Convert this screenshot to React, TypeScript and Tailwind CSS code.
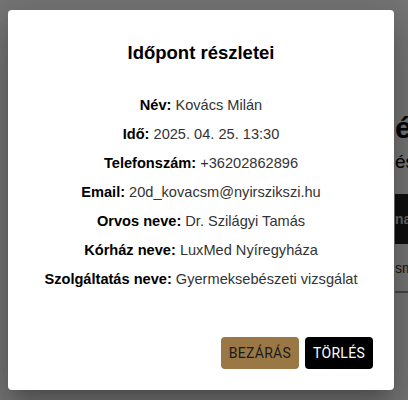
import React from "react";

const rows: [string, string][] = [
  ["Név:", "Kovács Milán"],
  ["Idő:", "2025. 04. 25. 13:30"],
  ["Telefonszám:", "+36202862896"],
  ["Email:", "20d_kovacsm@nyirszikszi.hu"],
  ["Orvos neve:", "Dr. Szilágyi Tamás"],
  ["Kórház neve:", "LuxMed Nyíregyháza"],
  ["Szolgáltatás neve:", "Gyermeksebészeti vizsgálat"],
];

export default function App() {
  return (
    <div className="relative w-[408px] h-[400px] overflow-hidden bg-white" style={{ fontFamily: '"Liberation Sans", Arial, sans-serif' }}>
      {/* background page */}
      <div className="flex flex-col pl-[395px] pt-[110px] text-black">
        <div className="text-[30px] font-bold leading-[36px] whitespace-nowrap">ések</div>
        <div className="text-[19px] leading-[24px] mt-[4px] whitespace-nowrap">ések</div>
        <div className="mt-[20px] h-[50px] bg-[#222] text-[#ddd] text-[14px] font-bold flex items-center whitespace-nowrap">nai</div>
        <div className="mt-[14px] text-[14px] text-[#4a3510] whitespace-nowrap">sm</div>
        <div className="mt-[12px] h-[2px] bg-[#999] w-[20px]"></div>
      </div>
      {/* overlay */}
      <div className="absolute inset-0 bg-black/[0.54] pl-[8px] pt-[10px]">
        <div className="w-[386px] h-[380px] bg-white rounded-[4px] shadow-[0_11px_15px_-7px_rgba(0,0,0,0.2),0_24px_38px_3px_rgba(0,0,0,0.14),0_9px_46px_8px_rgba(0,0,0,0.12)] flex flex-col">
          <h2 className="text-[18.5px] font-bold text-center text-black mt-[32px] leading-[22px]">Időpont részletei</h2>
          <div className="flex flex-col items-center mt-[31px] gap-[8px] text-[14.6px] text-[#333] leading-[21px]">
            {rows.map(([k, v]) => (
              <p key={k} className="whitespace-nowrap">
                <span className="font-bold text-black">{k}</span> {v}
              </p>
            ))}
          </div>
          <div className="mt-auto mb-[21px] mr-[21px] flex justify-end gap-[6px]" style={{ fontFamily: 'Roboto, sans-serif' }}>
            <button className="h-[32px] px-[8px] rounded-[4px] bg-[#9a7845] text-[#1a1a1a] text-[14px] tracking-[0.02em]">BEZÁRÁS</button>
            <button className="h-[32px] px-[8px] rounded-[4px] bg-black text-white text-[14px] tracking-[0.02em]">TÖRLÉS</button>
          </div>
        </div>
      </div>
    </div>
  );
}
